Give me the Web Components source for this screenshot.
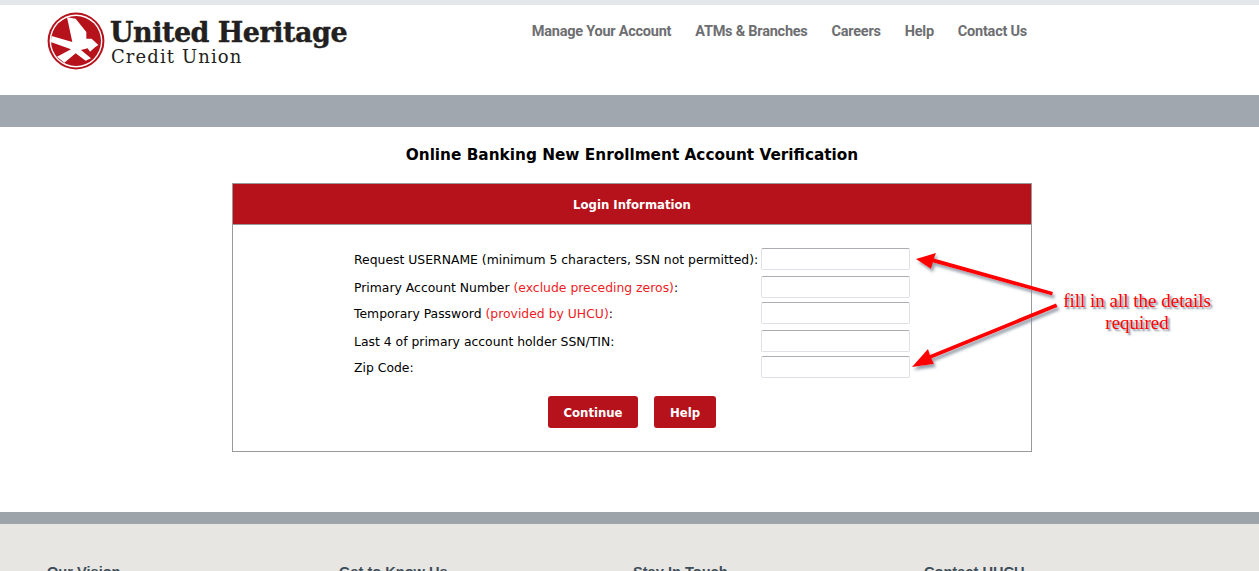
<!DOCTYPE html>
<html lang="en">
<head>
<meta charset="utf-8">
<title>Online Banking New Enrollment Account Verification</title>
<style>
  html, body { margin: 0; padding: 0; height: 571px; overflow: hidden; background: #fff; }
  body { font-family: "DejaVu Sans", Verdana, sans-serif; color: #000; position: relative; }
  uh-header, uh-main, uh-footer { display: block; }
  .red { color: #ed1c24; }
</style>
</head>
<body>

<template id="header-tpl">
  <style>
    :host { display: block; border-top: 5px solid #e3e7ea; }
    .top { height: 90px; display: flex; justify-content: space-between; align-items: flex-start; padding: 0 232px 0 47px; }
    .logo { display: flex; padding-top: 7px; }
    .logo svg { width: 58px; height: 58px; flex: none; }
    .name { margin-left: 5px; color: #231f20; font-family: "DejaVu Serif", serif; }
    .name b { display: block; font-size: 27px; line-height: 28px; margin-top: 7px; letter-spacing: -.5px; -webkit-text-stroke: .4px #231f20; white-space: nowrap; }
    .name span { display: block; font-size: 18px; line-height: 20px; letter-spacing: 1.1px; margin-left: 1px; white-space: nowrap; }
    nav { display: flex; gap: 24px; padding-top: 18px; }
    ::slotted(a) { font: 700 14.5px/18px Roboto, "Liberation Sans", sans-serif; letter-spacing: -.24px; color: #6d6e71; text-decoration: none; }
    .band { height: 32px; background: #a0a7ae; }
  </style>
  <div class="top">
    <div class="logo">
      <svg viewBox="0 0 58 58">
        <circle cx="29" cy="29" r="28.4" fill="#b5121b"/>
        <circle cx="29" cy="29" r="26.4" fill="#fff"/>
        <circle cx="29" cy="29" r="25" fill="#b5121b"/>
        <path transform="translate(-2 -2) scale(.3333)" fill="#fff" d="M66 22 L92 26 L124 66 L124 86 L140 86 L160 105 L150 112 L135 125 L128 115 L108 120 L138 145 L122 152 L92 130 L58 158 L36 140 L78 118 L17 96 L20 78 L82 96Z"/>
      </svg>
      <div class="name"><b>United Heritage</b><span>Credit Union</span></div>
    </div>
    <nav><slot></slot></nav>
  </div>
  <div class="band"></div>
</template>

<template id="main-tpl">
  <style>
    :host { display: block; padding: 18px 0 60px 5px; }
    h1 { margin: 0 0 18px; font-size: 15.3px; line-height: 20px; font-weight: bold; text-align: center; }
  </style>
  <h1><slot name="title"></slot></h1>
  <slot></slot>
</template>

<template id="panel-tpl">
  <style>
    :host { display: block; width: 798px; margin: 0 auto; border: 1px solid #999; }
    .head { box-sizing: border-box; height: 41px; padding-top: 2px; background: #b5121b; border-bottom: 1px solid #999; color: #fff; font-size: 11.7px; font-weight: bold; display: flex; align-items: center; justify-content: center; }
    .body { padding: 23px 0 23px 121px; }
    .actions { display: flex; justify-content: center; gap: 16px; margin: 18px 0 0 -121px; }
  </style>
  <div class="head"><slot name="heading"></slot></div>
  <div class="body">
    <slot></slot>
    <div class="actions"><slot name="actions"></slot></div>
  </div>
</template>

<template id="field-tpl">
  <style>
    :host { display: flex; align-items: center; height: 22px; font-size: 12.4px; }
    label { width: 407px; flex: none; white-space: nowrap; }
    input { box-sizing: border-box; width: 149px; height: 22px; margin: 0; padding: 1px 3px; background: #fff; border: 1px solid #e0e0e6; border-top-color: #abadb3; border-radius: 2px; outline: none; }
  </style>
  <label><slot></slot></label>
  <input type="text">
</template>

<template id="button-tpl">
  <style>
    :host { box-sizing: border-box; display: inline-flex; align-items: center; justify-content: center; height: 32px; padding-top: 1px; background: #b5121b; border-radius: 3px; color: #fff; font-size: 11.7px; font-weight: bold; cursor: pointer; }
  </style>
  <slot></slot>
</template>

<template id="note-tpl">
  <style>
    :host { display: block; position: absolute; left: 905px; top: 250px; width: 330px; height: 130px; }
    svg { position: absolute; left: 0; top: 0; overflow: visible; }
    p { position: absolute; left: 132px; top: 40px; width: 200px; margin: 0; text-align: center; font: 19px/22px "Liberation Serif", serif; color: #f00; text-shadow: 2px 2px 2px #7d8796; }
  </style>
  <svg width="330" height="130" viewBox="0 0 330 130">
    <defs><filter id="s" x="-10%" y="-20%" width="125%" height="150%"><feDropShadow dx="2" dy="3" stdDeviation="1.5" flood-color="#7d8796" flood-opacity=".8"/></filter></defs>
    <g filter="url(#s)" fill="#f00" stroke="none">
      <path d="M11 9 L31 3 L29 8.5 L148 42 L147 45.5 L28 12.5 L26 19Z"/>
      <path d="M7 117 L23 99 L25 105 L151 53.5 L152.5 57 L26.5 108.5 L29 114Z"/>
    </g>
  </svg>
  <p><slot></slot></p>
</template>

<template id="footer-tpl">
  <style>
    :host { display: block; border-top: 12px solid #9da5ab; background: #e8e6e2; height: 120px; }
    .cols { display: grid; grid-template-columns: 292px 294px 291px 1fr; padding: 39px 0 0 47px; }
    ::slotted(h4) { margin: 0; font: bold 14.6px/18px "Liberation Sans", sans-serif; color: #3d4c59; }
  </style>
  <div class="cols"><slot></slot></div>
</template>

<uh-header>
  <a href="#">Manage Your Account</a>
  <a href="#">ATMs &amp; Branches</a>
  <a href="#">Careers</a>
  <a href="#">Help</a>
  <a href="#">Contact Us</a>
</uh-header>

<uh-main>
  <span slot="title">Online Banking New Enrollment Account Verification</span>
  <uh-panel>
    <span slot="heading">Login Information</span>
    <uh-field style="margin-bottom:6px">Request USERNAME (minimum 5 characters, SSN not permitted):</uh-field>
    <uh-field style="margin-bottom:4px">Primary Account Number <span class="red">(exclude preceding zeros)</span>:</uh-field>
    <uh-field style="margin-bottom:6px">Temporary Password <span class="red">(provided by UHCU)</span>:</uh-field>
    <uh-field style="margin-bottom:4px">Last 4 of primary account holder SSN/TIN:</uh-field>
    <uh-field>Zip Code:</uh-field>
    <uh-button slot="actions" style="width:90px">Continue</uh-button>
    <uh-button slot="actions" style="width:62px">Help</uh-button>
  </uh-panel>
</uh-main>

<uh-footer>
  <h4>Our Vision</h4>
  <h4>Get to Know Us</h4>
  <h4>Stay In Touch</h4>
  <h4>Contact UHCU</h4>
</uh-footer>

<uh-note>fill in all the details<br>required</uh-note>

<script>
  // each element just stamps its template into an open shadow root
  const parts = {
    'uh-header': 'header-tpl',
    'uh-main': 'main-tpl',
    'uh-panel': 'panel-tpl',
    'uh-field': 'field-tpl',
    'uh-button': 'button-tpl',
    'uh-note': 'note-tpl',
    'uh-footer': 'footer-tpl'
  };

  Object.entries(parts).forEach(([tag, tplId]) => {
    customElements.define(tag, class extends HTMLElement {
      constructor() {
        super();
        this.attachShadow({ mode: 'open' });
        this.shadowRoot.appendChild(document.getElementById(tplId).content.cloneNode(true));
      }
    });
  });
</script>
</body>
</html>
